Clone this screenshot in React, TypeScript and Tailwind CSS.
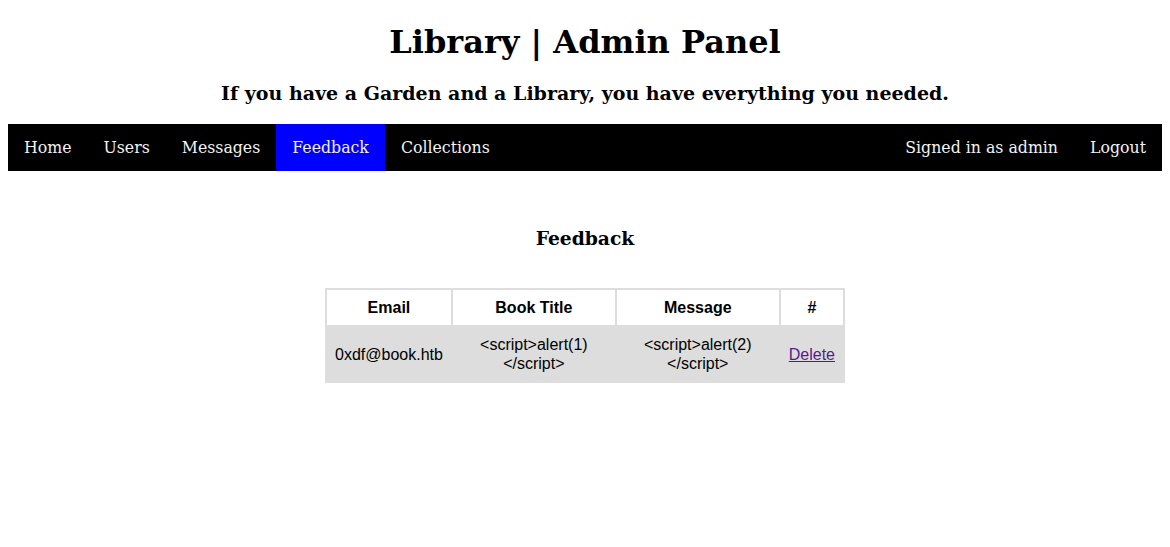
const navLeft = ["Home", "Users", "Messages", "Feedback", "Collections"];

const App = () => {
  return (
    <div className="min-h-[547px] bg-white px-2 text-black font-['DejaVu_Serif',serif]">
      <h1 className="pt-[24px] text-center text-[32px] font-bold leading-[37px]">
        Library | Admin Panel
      </h1>
      <h3 className="mt-[21px] text-center text-[19px] font-bold leading-[22px]">
        If you have a Garden and a Library, you have everything you needed.
      </h3>

      <nav className="mt-[20px] flex bg-black">
        {navLeft.map((item) => (
          <a
            key={item}
            href="#"
            className={`px-4 py-[14px] text-[15.75px] leading-[19px] text-[#f2f2f2] ${
              item === "Feedback" ? "bg-[#0000ff]" : ""
            }`}
          >
            {item}
          </a>
        ))}
        <div className="ml-auto flex">
          <span className="px-4 py-[14px] text-[15.75px] leading-[19px] text-[#f2f2f2]">Signed in as admin</span>
          <a href="#" className="px-4 py-[14px] text-[15.75px] leading-[19px] text-[#f2f2f2]">
            Logout
          </a>
        </div>
      </nav>

      <h3 className="mt-[56px] text-center text-[18.72px] font-bold leading-[22px]">Feedback</h3>

      <table className="mx-auto mt-[39px] w-[520px] border-collapse font-['Liberation_Sans',Arial,sans-serif] text-[16px] leading-[19px]">
        <thead>
          <tr>
            <th className="w-[123px] border-2 border-[#dddddd] p-2">Email</th>
            <th className="w-[164px] border-2 border-[#dddddd] p-2">Book Title</th>
            <th className="w-[164px] border-2 border-[#dddddd] p-2">Message</th>
            <th className="border-2 border-[#dddddd] p-2">#</th>
          </tr>
        </thead>
        <tbody>
          <tr className="bg-[#dddddd]">
            <td className="border-2 border-[#dddddd] p-2 text-center">0xdf@book.htb</td>
            <td className="border-2 border-[#dddddd] p-2 text-center">
              {"<script>alert(1)"}
              <br />
              {"</script>"}
            </td>
            <td className="border-2 border-[#dddddd] p-2 text-center">
              {"<script>alert(2)"}
              <br />
              {"</script>"}
            </td>
            <td className="border-2 border-[#dddddd] p-2 text-center">
              <a href="#" className="text-[#551a8b] underline">
                Delete
              </a>
            </td>
          </tr>
        </tbody>
      </table>
    </div>
  );
};

export default App;
